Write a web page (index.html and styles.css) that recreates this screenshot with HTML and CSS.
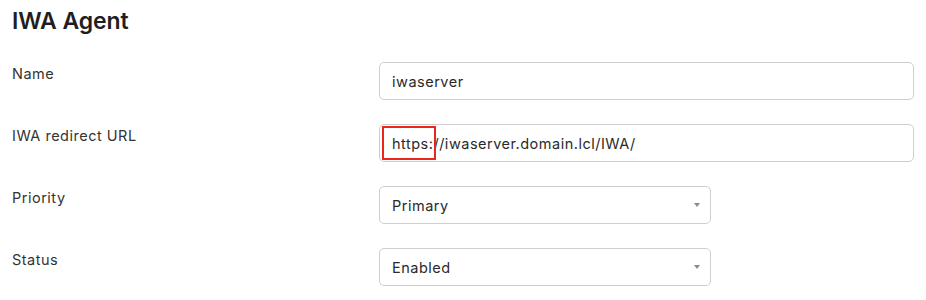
FILE: index.html
```html
<!DOCTYPE html>
<html lang="en">
<head>
  <meta charset="UTF-8">
  <meta name="viewport" content="width=device-width, initial-scale=1.0">
  <title>IWA Agent</title>
  <link rel="stylesheet" href="styles.css">
</head>
<body>
  <h1>IWA Agent</h1>

  <form class="agent-form">
    <div class="row">
      <label class="label">Name</label>
      <div class="field wide">
        <div class="input">iwaserver</div>
      </div>
    </div>

    <div class="row">
      <label class="label">IWA redirect URL</label>
      <div class="field wide">
        <div class="input"><span class="marked">https:</span>//iwaserver.domain.lcl/IWA/</div>
      </div>
    </div>

    <div class="row">
      <label class="label">Priority</label>
      <div class="field narrow">
        <div class="input select">Primary<span class="caret"></span></div>
      </div>
    </div>

    <div class="row">
      <label class="label">Status</label>
      <div class="field narrow">
        <div class="input select">Enabled<span class="caret"></span></div>
      </div>
    </div>
  </form>
</body>
</html>
```

FILE: styles.css
```css
body {
  margin: 0;
  padding: 6px 12px 0 12px;
  background: #fff;
  color: #222;
  font-family: Inter, "Noto Sans", sans-serif;
}

h1 {
  font-size: 23px;
  font-weight: 600;
  letter-spacing: -0.1px;
  margin: 0 0 26px 0;
  line-height: 30px;
  color: #1f1f1f;
}

.agent-form {
  display: flex;
  flex-direction: column;
  gap: 24px;
}

.row {
  display: grid;
  grid-template-columns: 367px 1fr;
}

.label {
  font-size: 14.5px;
  letter-spacing: 0.5px;
  color: #333;
  padding-top: 3px;
  line-height: 17px;
}

.field.wide {
  width: 535px;
}
.field.narrow {
  width: 332px;
}

.input {
  position: relative;
  height: 38px;
  box-sizing: border-box;
  border: 1px solid #cfcfcf;
  border-radius: 5px;
  padding: 0 12px;
  display: flex;
  align-items: center;
  font-size: 14.5px;
  letter-spacing: 0.5px;
  color: #2a2a2a;
}

.marked {
  position: relative;
}
.marked::after {
  content: "";
  position: absolute;
  left: -10px;
  right: -3px;
  top: -9px;
  bottom: -8px;
  border: 2px solid #e8281c;
}

.caret {
  position: absolute;
  right: 10px;
  top: 16px;
  width: 0;
  height: 0;
  border-left: 3px solid transparent;
  border-right: 3px solid transparent;
  border-top: 4px solid #8a8a8a;
}
```
